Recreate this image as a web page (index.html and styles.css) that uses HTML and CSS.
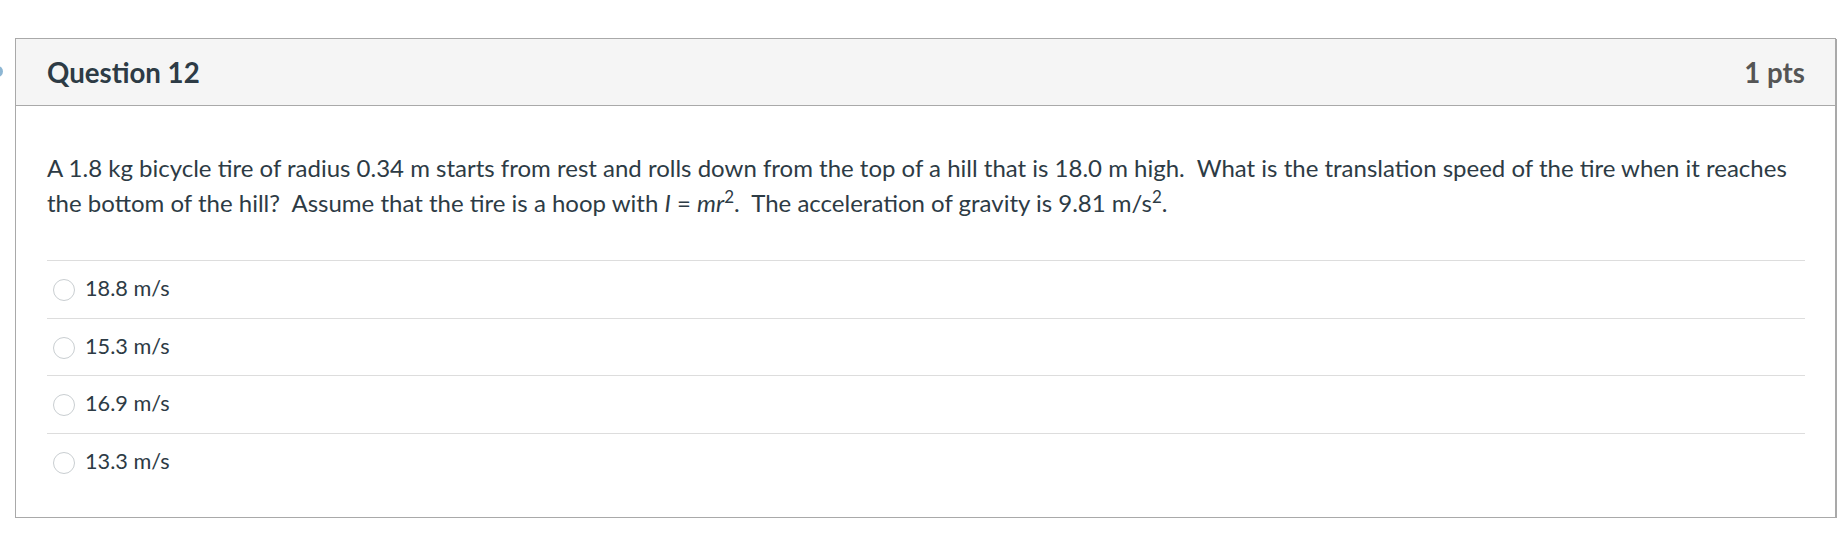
FILE: index.html
```html
<!DOCTYPE html>
<html lang="en">
<head>
<meta charset="utf-8">
<title>Question 12</title>
<link rel="stylesheet" href="styles.css">
</head>
<body>
<span class="marker"></span>
<div class="page">
  <div class="question">
    <div class="q-header">
      <span class="q-name">Question 12</span>
      <span class="q-points">1 pts</span>
    </div>
    <div class="q-body">
      <p class="q-text">A 1.8 kg bicycle tire of radius 0.34 m starts from rest and rolls down from the top of a hill that is 18.0 m high.&nbsp; What is the translation speed of the tire when it reaches the bottom of the hill?&nbsp; Assume that the tire is a hoop with <em>I</em> = <em>mr</em><sup>2</sup>.&nbsp; The acceleration of gravity is 9.81 m/s<sup>2</sup>.</p>
      <div class="answers">
        <div class="answer"><span class="radio"></span><span class="answer-text">18.8 m/s</span></div>
        <div class="answer"><span class="radio"></span><span class="answer-text">15.3 m/s</span></div>
        <div class="answer"><span class="radio"></span><span class="answer-text">16.9 m/s</span></div>
        <div class="answer"><span class="radio"></span><span class="answer-text">13.3 m/s</span></div>
      </div>
    </div>
  </div>
</div>
</body>
</html>
```
FILE: styles.css
```css
html, body {
  margin: 0;
  padding: 0;
  background: #ffffff;
}
body {
  font-family: Lato, "Open Sans", "Liberation Sans", sans-serif;
  color: #2d3b45;
  position: relative;
}
.marker {
  position: absolute;
  left: -8px;
  top: 66px;
  width: 11px;
  height: 11px;
  border-radius: 50%;
  background: #8db6d3;
}
.page {
  padding: 38px 7px 0 15px;
}
.question {
  border: 1px solid #a9a9a9;
  box-shadow: 1px 1px 0 #a9a9a9;
  background: #fff;
}
.q-header {
  display: flex;
  justify-content: space-between;
  align-items: center;
  height: 66px;
  padding: 0 30px 0 31px;
  background: #f5f5f5;
  border-bottom: 1px solid #a9a9a9;
}
.q-name {
  font-size: 27.65px;
  font-weight: 700;
  color: #2d3b45;
}
.q-points {
  font-size: 27.65px;
  font-weight: 700;
  color: #555555;
}
.q-body {
  padding: 45px 30px 27px 31px;
}
.q-text {
  margin: 0 0 40px 0;
  font-size: 24px;
  line-height: 34.56px;
}
.q-text sup {
  font-size: 17px;
  line-height: 0;
  vertical-align: 9px;
}
.answer {
  display: flex;
  align-items: flex-start;
  border-top: 1px solid #dddddd;
  padding: 10px 0 12px 6px;
}
.radio {
  width: 20px;
  height: 20px;
  border: 1px solid #c9ced1;
  border-radius: 50%;
  background: #fff;
  margin: 8px 10px 0 0;
  flex: none;
}
.answer-text {
  font-size: 21.7px;
  line-height: 34.56px;
}
```
